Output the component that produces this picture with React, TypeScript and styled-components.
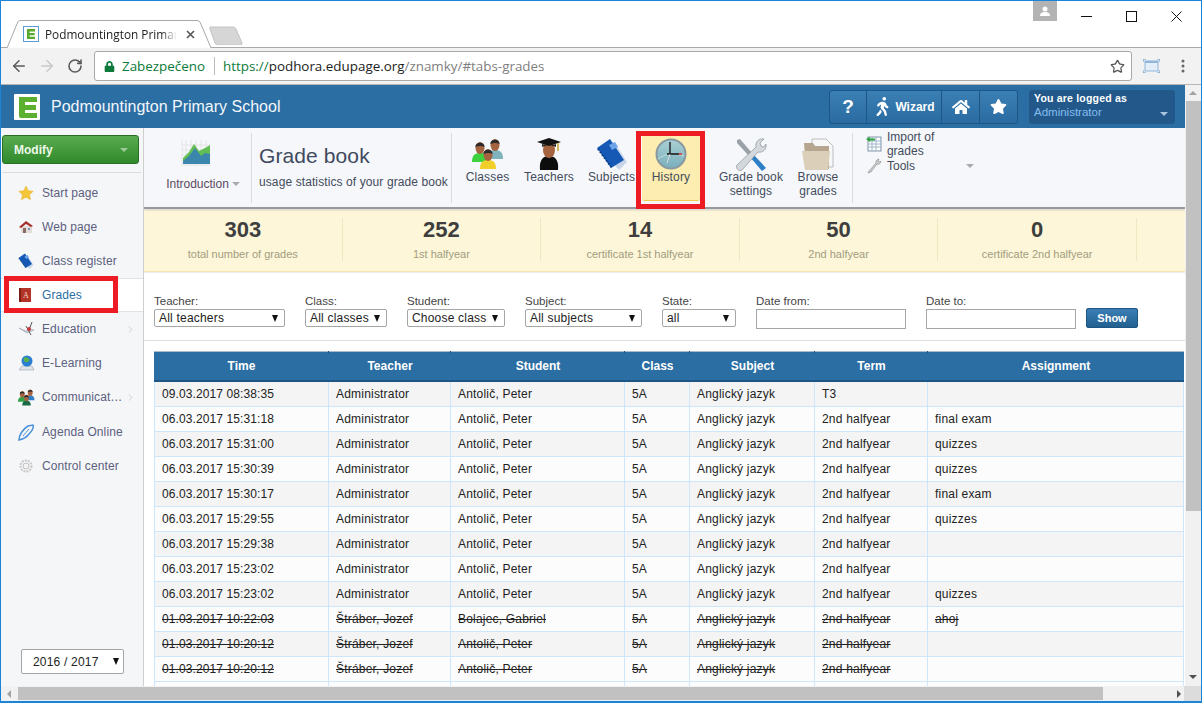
import React from "react";
import styled, { createGlobalStyle } from "styled-components";
import { ArrowLeft, ArrowRight, RotateCw, Star as StarOutline, ChevronRight } from "lucide-react";
import { FaWalking, FaHome, FaStar, FaLock } from "react-icons/fa";

const Global = createGlobalStyle`
  html, body { margin: 0; padding: 0; width: 1202px; height: 703px; overflow: hidden; background: #fff; }
  * { box-sizing: border-box; }
  body { font-family: "Liberation Sans", Arial, sans-serif; font-size: 12px; color: #222; }
`;

const Frame = styled.div`
  width: 1202px; height: 703px; display: flex; flex-direction: column;
  border: 1px solid #1a84d8; border-bottom-width: 2px; background: #fff; overflow: hidden;
`;
const TabStrip = styled.div`
  height: 47px; flex: none; display: flex; align-items: flex-end; padding-left: 6px;
  border-bottom: 1px solid #a9a9a9; position: relative; background: #fff;
`;
const Tab = styled.div`
  position: relative; width: 205px; height: 28px; margin-bottom: -1px; display: flex; align-items: center;
  padding: 0 0 0 16px; gap: 6px;
`;
const TabShape = styled.svg`position: absolute; inset: 0;`;
const TabTitle = styled.span`
  position: relative; width: 132px; overflow: hidden; white-space: nowrap; font: 11.8px "Open Sans", sans-serif; color: #222;
  -webkit-mask-image: linear-gradient(to right, #000 88%, transparent 100%);
  mask-image: linear-gradient(to right, #000 88%, transparent 100%);
`;
const TabClose = styled.svg`position: relative; flex: none; margin-left: 3px;`;
const NewTab = styled.svg`margin: 0 0 2px -3px; flex: none;`;
const WindowControls = styled.div`
  position: absolute; top: 0; right: 2px; display: flex; align-items: flex-start; height: 22px;
`;
const ProfileBadge = styled.div`
  width: 24px; height: 20px; background: #b3b3b3; display: flex; align-items: center; justify-content: center; margin-right: 7px;
`;
const WinButton = styled.div`
  width: 45px; height: 30px; display: flex; align-items: center; justify-content: center;
`;
const BrowserBar = styled.div`
  height: 37px; flex: none; display: flex; align-items: center; background: #f2f2f2;
  border-bottom: 1px solid #b5b5b5; padding: 0 0 0 4px;
`;
const NavIcon = styled.span<{ $dim?: boolean }>`
  width: 28px; height: 20px; display: flex; align-items: center; justify-content: center; color: ${p => p.$dim ? "#c9c9c9" : "#5a5a5a"};
`;
const Omnibox = styled.div`
  margin-left: 5px; width: 1038px; height: 30px; background: #fff; border: 1px solid #a9a9a9; border-radius: 3px;
  display: flex; align-items: center; padding: 0 6px 0 9px; font: 13.4px "Open Sans", sans-serif; white-space: nowrap;
`;
const Secure = styled.span`color: #0b7a3b; margin-left: 7px; padding-right: 9px; border-right: 1px solid #bbb; line-height: 18px;`;
const UrlPart = styled.span<{ $tone: "scheme" | "host" | "path" }>`
  color: ${p => p.$tone === "scheme" ? "#0b7a3b" : p.$tone === "host" ? "#222" : "#808080"};
`;
const UrlBox = styled.span`margin-left: 8px; flex: 1;`;
const BarSide = styled.div`display: flex; align-items: center; margin-left: 11px; gap: 21px;`;
const Viewport = styled.div`flex: 1; min-height: 0; display: flex;`;
const Page = styled.div`flex: 1; min-width: 0; display: flex; flex-direction: column; overflow: hidden;`;
const AppHeader = styled.header`
  height: 43px; flex: none; background: #2b6ea3; display: flex; align-items: center; padding-left: 13px; color: #fff;
`;
const School = styled.div`font-size: 16px; margin-left: 11px; color: #f3f7fb;`;
const HeadTools = styled.div`
  margin-left: auto; display: flex; height: 34px; border: 1px solid #1d5684; border-radius: 3px; margin-right: 11px;
  background: linear-gradient(#3a7fb5, #2a6ca1);
`;
const HeadTool = styled.div<{ $w: number }>`
  width: ${p => p.$w}px; display: flex; align-items: center; justify-content: center; gap: 3px; color: #fff;
  font-weight: bold; font-size: 12px; border-left: 1px solid #1d5684;
  &:first-child { border-left: 0; }
`;
const Question = styled.span`font-size: 19px;`;
const LoggedBox = styled.div`
  width: 146px; height: 34px; background: #22598a; border-radius: 3px; margin-right: 10px; padding: 1px 5px; position: relative;
  font-size: 11px; line-height: 14px;
`;
const LoggedTitle = styled.div`color: #fff; font-weight: bold; font-size: 10.5px; letter-spacing: .2px;`;
const LoggedName = styled.div`color: #86bdf0; font-size: 11.5px;`;
const Caret = styled.i<{ $color?: string }>`
  display: inline-block; width: 0; height: 0; border: 4px solid transparent; border-bottom-width: 0; border-top: 4px solid ${p => p.$color || "#aaa"};
`;
const LoggedCaret = styled(Caret)`position: absolute; right: 7px; bottom: 8px; border-top-color: #a9c6de;`;
const Body = styled.div`flex: 1; min-height: 0; display: flex;`;
const Sidebar = styled.nav`
  width: 143px; flex: none; background: #f5f6f8; border-right: 1px solid #cfcfcf; display: flex; flex-direction: column; position: relative;
`;
const ModifyButton = styled.div`
  margin: 7px 4px 0 1px; height: 29px; border: 1px solid #2a6e25; border-radius: 3px; background: linear-gradient(#5aab4f, #2f8a2c);
  color: #eef8ea; font-weight: bold; font-size: 12px; display: flex; align-items: center; justify-content: space-between; padding: 0 10px 0 11px;
`;
const SideRule = styled.div`height: 1px; background: #dcdcdc; margin: 8px 2px 3px 1px;`;
const SideItem = styled.div<{ $active?: boolean; $nudge?: boolean }>`
  height: 34px; display: flex; align-items: center; position: relative; padding-left: 17px; flex: none;
  margin-top: ${p => p.$nudge ? 1 : 0}px;
  color: ${p => p.$active ? "#2b6ea3" : "#5c5f7e"}; font-size: 12px; letter-spacing: .1px;
  background: ${p => p.$active ? "#fff" : "transparent"};
  ${p => p.$active ? "border-top: 1px solid #e2e2e2; border-bottom: 1px solid #e2e2e2;" : ""}
`;
const SideIcon = styled.span`width: 24px; flex: none; display: flex; align-items: center;`;
const SideLabel = styled.span`overflow: hidden; text-overflow: ellipsis; white-space: nowrap; max-width: 83px;`;
const SideChevron = styled(ChevronRight)`position: absolute; right: 7px; top: 12px; color: #c9c9c9;`;
const YearWrap = styled.div`margin-top: auto; padding: 0 0 12px 20px;`;
const SelectBox = styled.div<{ $w: number; $h?: number }>`
  width: ${p => p.$w}px; height: ${p => p.$h || 18}px; border: 1px solid #a6a6a6; border-radius: 2px; background: #fff;
  display: flex; align-items: center; justify-content: space-between; padding: 0 6px 0 4px; color: #222; font-size: 12px; letter-spacing: .2px; white-space: nowrap;
`;
const YearSelect = styled(SelectBox)`padding: 0 4px 0 11px; font-size: 12px;`;
const BlackCaret = styled.i`
  display: inline-block; width: 0; height: 0; border-left: 3.5px solid transparent; border-right: 3.5px solid transparent; border-top: 7px solid #111; flex: none;
`;
const Highlight = styled.div<{ $l: number; $t: number; $w: number; $h: number }>`
  position: absolute; left: ${p => p.$l}px; top: ${p => p.$t}px; width: ${p => p.$w}px; height: ${p => p.$h}px;
  border: 5px solid #ed1c24; pointer-events: none; z-index: 5;
`;
const Content = styled.main`flex: 1; min-width: 0; display: flex; flex-direction: column; position: relative; overflow: hidden;`;
const Ribbon = styled.div`
  height: 81px; flex: none; background: #f5f7fa; border-bottom: 2px solid #9a9a9a; display: flex; padding-top: 5px; box-shadow: 0 1px 2px rgba(0,0,0,.2);
  position: relative; z-index: 1;
`;
const RibbonSection = styled.div<{ $w: number; $sep?: boolean }>`
  width: ${p => p.$w}px; flex: none; height: 70px; display: flex; position: relative;
  ${p => p.$sep ? "border-right: 1px solid #dcdcdc;" : ""}
`;
const IntroBlock = styled.div`width: 100%; display: flex; flex-direction: column; align-items: center; padding-top: 7px; color: #5c4a5e;`;
const IntroIcon = styled.span`display: flex; margin-right: 4px;`;
const IntroLabel = styled.div`margin: 10px 0 0 11px; display: flex; align-items: center; gap: 3px;`;
const TitleBlock = styled.div`padding: 10px 0 0 7px;`;
const GradeTitle = styled.div`font-size: 21px; color: #3f4a5e; line-height: 26px; letter-spacing: .1px;`;
const GradeSub = styled.div`font-size: 12px; color: #444c5c; margin-top: 6px; white-space: nowrap; letter-spacing: .1px;`;
const RibbonTool = styled.div<{ $w: number; $ml?: number; $active?: boolean }>`
  width: ${p => p.$w}px; margin-left: ${p => p.$ml || 0}px; flex: none; height: 68px; display: flex; flex-direction: column; align-items: center; text-align: center; padding-top: 5px;
  color: #444c5c; font-size: 12px; line-height: 14px; letter-spacing: .15px; white-space: nowrap;
  ${p => p.$active ? "background: #fdedb0; border-bottom: 1px solid #f2c94c; border-radius: 0 0 3px 3px;" : ""}
`;
const ToolIconBox = styled.div`height: 32px; display: flex; align-items: flex-start; justify-content: center;`;
const ToolText = styled.div``;
const SideTools = styled.div`display: flex; flex-direction: column; padding: 3px 0 0 13px; gap: 6px;`;
const SideTool = styled.div`height: 16px; display: flex; align-items: center; gap: 5px; color: #444c5c; font-size: 12px; width: 108px; position: relative;`;
const ToolsCaret = styled(Caret)`position: absolute; right: 0; top: 6px;`;
const Stats = styled.div`
  height: 62px; flex: none; margin-top: 1px; background: #fdf6d8; border-bottom: 1px solid #f2e5b0; display: flex; overflow: hidden; padding-top: 8px;
  box-shadow: 0 1px 0 #ececec;
`;
const Stat = styled.div`
  width: 198.6px; flex: none; height: 43px; border-right: 1px solid #efe6c2; text-align: center;
`;
const StatValue = styled.div`font-size: 22px; font-weight: bold; color: #3e3e3e; line-height: 24px;`;
const StatLabel = styled.div`font-size: 11px; color: #a29d80; margin-top: 6px; line-height: 13px;`;
const Filters = styled.div`
  height: 68px; flex: none; margin-top: 1px; border-bottom: 1px solid #dedede; display: flex; align-items: flex-start; padding: 21px 0 0 10px; gap: 20px;
`;
const Field = styled.div`display: flex; flex-direction: column;`;
const FieldLabel = styled.label`font-size: 11.5px; color: #444; line-height: 15px;`;
const DateInput = styled.div<{ $w: number }>`width: ${p => p.$w}px; height: 20px; border: 1px solid #a6a6a6; background: #fff;`;
const ShowButton = styled.div`
  width: 52px; height: 20px; margin: 14px 0 0 -10px; background: linear-gradient(#3a7fb5, #22608f); border: 1px solid #1d5684; border-radius: 2px;
  color: #fff; font-weight: bold; font-size: 11px; display: flex; align-items: center; justify-content: center;
`;
const Grid = styled.table`
  margin: 10px 0 0 10px; width: 1030px; border-collapse: separate; border-spacing: 0; table-layout: fixed; flex: none;
`;
const Th = styled.th<{ $w: number }>`
  width: ${p => p.$w}px; height: 31px; padding: 0; background: #2b6ea3; color: #fff; font-size: 12px; font-weight: bold;
  border-top: 1px solid #a9bccb; border-bottom: 2px solid #1d5684; position: relative;
  &:not(:last-child)::after { content: ""; position: absolute; right: 0; top: -1px; width: 1px; height: 2px; background: #1d5684; }
`;
const Row = styled.tr<{ $odd: boolean; $struck: boolean }>`
  background: ${p => p.$odd ? "#f4f4f4" : "#fcfcfc"};
  text-decoration: ${p => p.$struck ? "line-through" : "none"};
`;
const Td = styled.td`
  height: 25px; padding: 0 7px; border-bottom: 1px solid #cde6fb; border-right: 1px solid #cde6fb; font-size: 12px; color: #222; white-space: nowrap; overflow: hidden;
  text-decoration: inherit; letter-spacing: .2px;
  &:first-child { border-left: 1px solid #cde6fb; letter-spacing: .1px; }
`;
const VScroll = styled.div`
  width: 16px; flex: none; background: #f1f1f1; display: flex; flex-direction: column; align-items: center; padding-top: 6px;
`;
const ScrollThumbV = styled.div`width: 15px; height: 410px; background: #c1c1c1; margin-top: 6px;`;
const ScrollArrowUp = styled.i`width: 0; height: 0; border: 4px solid transparent; border-top: 0; border-bottom: 4px solid #a3a3a3;`;
const ScrollArrowDown = styled.i`width: 0; height: 0; border: 4px solid transparent; border-bottom: 0; border-top: 4px solid #505050; margin-top: auto; margin-bottom: 7px;`;
const HScroll = styled.div`height: 15px; flex: none; background: #f1f1f1; display: flex; align-items: center;`;
const ArrowL = styled.i`width: 0; height: 0; border: 4px solid transparent; border-left: 0; border-right: 4px solid #a3a3a3; margin-left: 6px;`;
const ThumbH = styled.div`width: 1085px; height: 13px; background: #c1c1c1; margin-left: 7px;`;
const ArrowR = styled.i`width: 0; height: 0; border: 4px solid transparent; border-right: 0; border-left: 4px solid #505050; margin-left: auto; margin-right: 3px;`;
const Corner = styled.div`width: 17px; height: 100%; background: #dcdcdc; flex: none;`;

/* Drawings */
const ELogo = ({ s = 26 }: { s?: number }) => (
  <svg width={s} height={s} viewBox="0 0 26 26"><rect width="26" height="26" rx="1" fill="#fff" /><path d="M5 3h18v5H11v3h11v5H11v3h12v5H7a2 2 0 0 1-2-2z" fill="#5bb12f" /></svg>
);
const Favicon = () => (
  <svg width="16" height="16" viewBox="0 0 16 16" style={{ position: "relative", flex: "none" }}><rect x=".5" y=".5" width="15" height="15" fill="#fff" stroke="#5a9bd5" /><path d="M4 3h8v2.4H6.6v1.6h5v2.2h-5v1.5H12V13H4z" fill="#59a92c" /></svg>
);
const Chart = () => (
  <svg width="30" height="27" viewBox="0 0 30 27"><path d="M1 0v26M1 25h29M5 0v26M10 0v26M15 0v26M20 0v26M25 0v26M1 5h29M1 10h29M1 15h29M1 20h29" stroke="#e4e4e4" /><path d="M2 18l6-6 5-8 5 7 6-3 5-3v17H2z" fill="#62bd55" /><path d="M2 21l6-5 6-8 6 8 4-3 5 1v10H2z" fill="#3b86ad" /></svg>
);
const Person = ({ x, y, shirt, skin = "#a5643f" }: { x: number; y: number; shirt: string; skin?: string }) => (
  <g transform={`translate(${x} ${y})`}><path d="M0 21c0-7 3-9 8-9s8 2 8 9z" fill={shirt} /><ellipse cx="8" cy="7" rx="4.5" ry="6" fill={skin} /><path d="M3.4 6c-.5-5 9-6.400 9.200 0-3-1.500-6-1.500-9.200 0z" fill="#2b2b2b" /></g>
);
const Classes = () => (
  <svg width="32" height="32" viewBox="0 0 32 32"><Person x={15} y={0} shirt="#7fb2bd" /><Person x={0} y={3} shirt="#3fd23f" /><Person x={8} y={10} shirt="#f0cf2a" /></svg>
);
const Teacher = () => (
  <svg width="26" height="32" viewBox="0 0 26 32"><path d="M4 32c-1-10 3-14 9-14s10 4 9 14z" fill="#0d0d0d" /><ellipse cx="13" cy="12" rx="6" ry="8" fill="#a5643f" /><path d="M1 4l12-4 12 4-12 4z" fill="#111" /><path d="M6 6v3c4-2 10-2 14 0V6l-7 2z" fill="#222" /><path d="M22 5v8" stroke="#c9a227" strokeWidth="1.500" /></svg>
);
const BookBlue = ({ s = 32 }: { s?: number }) => (
  <svg width={s} height={s} viewBox="0 0 32 32"><path d="M18 4l13 20-8 8-9-10z" fill="#c6d5e8" /><path d="M14 1l14 21-13 8L1 10z" fill="#1559b5" /><path d="M13 7l6-3 3 5-6 3z" fill="#6da3e8" /><path d="M2 11l14 19" stroke="#0d3d80" strokeWidth="2" strokeDasharray="1.500 2" /></svg>
);
const Clock = () => (
  <svg width="32" height="32" viewBox="0 0 32 32"><defs><linearGradient id="clk" x1="0" y1="0" x2="0" y2="1"><stop offset="0" stopColor="#a8cfd3" /><stop offset="1" stopColor="#7bb0bd" /></linearGradient></defs><circle cx="16" cy="16" r="15.500" fill="#8a98a0" /><circle cx="16" cy="16" r="13.500" fill="url(#clk)" /><path d="M3 21c8-6 18-6 26-3" stroke="#c3dde2" fill="none" /><path d="M15 4v13M12 16h12" stroke="#111" strokeWidth="1.300" /><path d="M12 25l3-9" stroke="#ddd" /><path d="M24 16h3" stroke="#d33" strokeWidth="1.500" /></svg>
);
const Wrench = () => (
  <svg width="32" height="34" viewBox="0 0 32 34"><path d="M2 2l3-1 12 14-3 3L2 5z" fill="#9aa2a8" /><path d="M15 19l3-3 13 14-4 3z" fill="#2f7fc7" /><path d="M2 27L21 9c-1-5 3-9 8-8l-4 4 1 3 3 1 2-3c1 6-4 9-8 8L7 32c-3 2-7-2-5-5z" fill="#d3d8dc" stroke="#8d959b" strokeWidth=".7" /></svg>
);
const Folder = () => (
  <svg width="32" height="33" viewBox="0 0 32 33"><path d="M10 1h14l7 7v21H10z" fill="#f7f7f7" stroke="#bdbdbd" /><path d="M2 5h9l2 3h14v23H4z" fill="#b6a68f" /><path d="M0 13h28l-2 19H3z" fill="#dccfb9" /></svg>
);
const ImportIco = () => (
  <svg width="16" height="16" viewBox="0 0 16 16"><rect x="2" y="1" width="13" height="14" fill="#fff" stroke="#7d93a8" /><path d="M2 5h13M2 8h13M2 11h13M6 1v14M10 1v14" stroke="#9db6c9" /><path d="M0 3l4-2v1.500h5v2H4V6z" fill="#2ea33a" /></svg>
);
const ToolIco = () => (
  <svg width="16" height="16" viewBox="0 0 16 16"><path d="M2 15l1-2 7-8c-.5-2 1-4 3-4l-1 2 2 1 1-1c0 2-2 4-4 3l-6 8z" fill="#c9cbcd" stroke="#8a8a8a" strokeWidth=".6" /></svg>
);
const icoStar = <svg width="16" height="16" viewBox="0 0 16 16"><path d="M8 1l2.200 4.700 5 .6-3.700 3.400 1 5L8 12.200 3.500 14.700l1-5L.8 6.300l5-.6z" fill="#f3c739" stroke="#e5ae26" strokeWidth=".5" /></svg>;
const icoHouse = <svg width="16" height="16" viewBox="0 0 16 16"><path d="M3 7h11v7H3z" fill="#e3dcd8" /><path d="M1 8l7-6 7 5-2 1-5-3-5 4z" fill="#a8302a" /><path d="M5 9h3v5H5z" fill="#8a6a62" /><path d="M10 9h2v2h-2z" fill="#7a95b5" /></svg>;
const icoBook = <BookBlue s={16} />;
const icoGrades = <svg width="14" height="16" viewBox="0 0 14 16"><rect x="1" y="1" width="12" height="14" fill="#b33426" /><rect x="1" y="1" width="2" height="14" fill="#7d1e15" /><text x="8" y="11" fontSize="8" fontFamily="Liberation Serif, serif" textAnchor="middle" fill="#f3d9c9">A</text></svg>;
const icoEdu = <svg width="17" height="16" viewBox="0 0 17 16"><path d="M1 7l8 5 7-3-4-1-4 2z" fill="#c9d3db" stroke="#8a95a0" strokeWidth=".5" /><path d="M11 9l3-8M8 5l5 9" stroke="#555" /><circle cx="11" cy="8" r="2" fill="#c9373b" /></svg>;
const icoGlobe = <svg width="17" height="17" viewBox="0 0 17 17"><path d="M1 15l3-4h10l2 4z" fill="#dfe4ea" stroke="#8a95a0" strokeWidth=".5" /><circle cx="9" cy="6" r="5.500" fill="#2a7fd0" /><path d="M6 3c2-2 4 0 5 1s0 3-2 3-4 0-3-4z" fill="#5cb044" /></svg>;
const icoPeople = <svg width="17" height="17" viewBox="0 0 32 32"><Person x={15} y={0} shirt="#2f80c7" /><Person x={0} y={3} shirt="#2fa24a" /><Person x={8} y={10} shirt="#1a6a46" /></svg>;
const icoPen = <svg width="17" height="17" viewBox="0 0 17 17"><path d="M1 16c0-5 4-11 9-14l5-1c1 3-1 6-4 9-2 3-6 5-10 6z" fill="none" stroke="#4a90d9" strokeWidth="1.500" /><path d="M5 12l6-7" stroke="#4a90d9" /></svg>;
const icoGear = <svg width="16" height="16" viewBox="0 0 16 16"><circle cx="8" cy="8" r="5.500" fill="none" stroke="#c9c9c9" strokeWidth="2" strokeDasharray="2 1" /><circle cx="8" cy="8" r="3" fill="#f2f2f2" stroke="#c2c2c2" /></svg>;

const menu: { label: string; icon: React.ReactNode; active?: boolean; more?: boolean; nudge?: boolean }[] = [
  { label: "Start page", icon: icoStar },
  { label: "Web page", icon: icoHouse },
  { label: "Class register", icon: icoBook },
  { label: "Grades", icon: icoGrades, active: true },
  { label: "Education", icon: icoEdu, more: true },
  { label: "E-Learning", icon: icoGlobe },
  { label: "Communication", icon: icoPeople, more: true },
  { label: "Agenda Online", icon: icoPen, nudge: true },
  { label: "Control center", icon: icoGear },
];
const stats = [["303", "total number of grades"], ["252", "1st halfyear"], ["14", "certificate 1st halfyear"], ["50", "2nd halfyear"], ["0", "certificate 2nd halfyear"], ["", ""]];
const columns: [string, number][] = [["Time", 175], ["Teacher", 122], ["Student", 174], ["Class", 65], ["Subject", 125], ["Term", 113], ["Assignment", 256]];
const A = "Administrator", P = "Antolič, Peter", S = "Štráber, Jozef", L = "Anglický jazyk", H = "2nd halfyear";
const rows: [string, string, string, string, string, boolean][] = [
  ["09.03.2017 08:38:35", A, P, "T3", "", false],
  ["06.03.2017 15:31:18", A, P, H, "final exam", false],
  ["06.03.2017 15:31:00", A, P, H, "quizzes", false],
  ["06.03.2017 15:30:39", A, P, H, "quizzes", false],
  ["06.03.2017 15:30:17", A, P, H, "final exam", false],
  ["06.03.2017 15:29:55", A, P, H, "quizzes", false],
  ["06.03.2017 15:29:38", A, P, H, "", false],
  ["06.03.2017 15:23:02", A, P, H, "", false],
  ["06.03.2017 15:23:02", A, P, H, "quizzes", false],
  ["01.03.2017 10:22:03", S, "Bolajec, Gabriel", H, "ahoj", true],
  ["01.03.2017 10:20:12", S, P, H, "", true],
  ["01.03.2017 10:20:12", S, P, H, "", true],
];
const selects: [string, string, number][] = [["Teacher:", "All teachers", 131], ["Class:", "All classes", 82], ["Student:", "Choose class", 98], ["Subject:", "All subjects", 117], ["State:", "all", 74]];

export default function App() {
  return (
    <Frame>
      <Global />
      <TabStrip>
        <Tab>
          <TabShape width="205" height="28" viewBox="0 0 205 28"><path d="M0 28 L11 1.500 Q12 .5 14 .5 H190 Q192 .5 193 2 L204 28" fill="#fff" stroke="#a9a9a9" /></TabShape>
          <Favicon />
          <TabTitle>Podmountington Primary School</TabTitle>
          <TabClose width="9" height="9" viewBox="0 0 9 9"><path d="M1 1l7 7M8 1l-7 7" stroke="#555" strokeWidth="1.600" /></TabClose>
        </Tab>
        <NewTab width="34" height="19" viewBox="0 0 34 19"><path d="M1 1h23q2 0 3 2l6 14q.5 2-2 2H9q-2 0-3-2L1 3q-.5-2 0-2z" fill="#d6d6d6" stroke="#c4c4c4" /></NewTab>
        <WindowControls>
          <ProfileBadge><svg width="10" height="10" viewBox="0 0 10 10"><circle cx="5" cy="3" r="2.500" fill="#fff" /><path d="M0 10c0-3 2-4 5-4s5 1 5 4z" fill="#fff" /></svg></ProfileBadge>
          <WinButton><svg width="11" height="11" viewBox="0 0 11 11"><path d="M0 5.500h11" stroke="#111" /></svg></WinButton>
          <WinButton><svg width="11" height="11" viewBox="0 0 11 11"><rect x=".5" y=".5" width="10" height="10" fill="none" stroke="#111" /></svg></WinButton>
          <WinButton><svg width="11" height="11" viewBox="0 0 11 11"><path d="M.5.500l10 10M10.500.500l-10 10" stroke="#111" /></svg></WinButton>
        </WindowControls>
      </TabStrip>
      <BrowserBar>
        <NavIcon><ArrowLeft size={18} /></NavIcon>
        <NavIcon $dim><ArrowRight size={18} /></NavIcon>
        <NavIcon><RotateCw size={16} strokeWidth={2.4} /></NavIcon>
        <Omnibox>
          <FaLock size={11} color="#0b7a3b" />
          <Secure>Zabezpečeno</Secure>
          <UrlBox><UrlPart $tone="scheme">https://</UrlPart><UrlPart $tone="host">podhora.edupage.org</UrlPart><UrlPart $tone="path">/znamky/#tabs-grades</UrlPart></UrlBox>
          <StarOutline size={15} color="#555" strokeWidth={2} />
        </Omnibox>
        <BarSide>
          <svg width="17" height="14" viewBox="0 0 17 14"><rect x="2" y="2" width="13" height="10" fill="#e3eef8" stroke="#8fb6dc" /><path d="M2 3h13" stroke="#8fb6dc" strokeWidth="2" /><path d="M0 3V0h3M14 0h3v3M0 11v3h3M14 14h3v-3" fill="none" stroke="#5f94c6" /></svg>
          <svg width="4" height="14" viewBox="0 0 4 14"><circle cx="2" cy="2" r="1.500" fill="#666" /><circle cx="2" cy="7" r="1.500" fill="#666" /><circle cx="2" cy="12" r="1.500" fill="#666" /></svg>
        </BarSide>
      </BrowserBar>
      <Viewport>
        <Page>
          <AppHeader>
            <ELogo />
            <School>Podmountington Primary School</School>
            <HeadTools>
              <HeadTool $w={36}><Question>?</Question></HeadTool>
              <HeadTool $w={75}><FaWalking size={19} />Wizard</HeadTool>
              <HeadTool $w={38}><FaHome size={18} /></HeadTool>
              <HeadTool $w={38}><FaStar size={17} /></HeadTool>
            </HeadTools>
            <LoggedBox>
              <LoggedTitle>You are logged as</LoggedTitle>
              <LoggedName>Administrator</LoggedName>
              <LoggedCaret />
            </LoggedBox>
          </AppHeader>
          <Body>
            <Sidebar>
              <ModifyButton>Modify<Caret $color="#9fc99a" /></ModifyButton>
              <SideRule />
              {menu.map(m => (
                <SideItem key={m.label} $active={m.active} $nudge={m.nudge}>
                  <SideIcon>{m.icon}</SideIcon>
                  <SideLabel>{m.label}</SideLabel>
                  {m.more && <SideChevron size={11} />}
                </SideItem>
              ))}
              <YearWrap>
                <YearSelect $w={103} $h={25}>2016 / 2017<BlackCaret /></YearSelect>
              </YearWrap>
              <Highlight $l={3} $t={148} $w={114} $h={37} />
            </Sidebar>
            <Content>
              <Ribbon>
                <RibbonSection $w={108} $sep>
                  <IntroBlock><IntroIcon><Chart /></IntroIcon><IntroLabel>Introduction <Caret /></IntroLabel></IntroBlock>
                </RibbonSection>
                <RibbonSection $w={200} $sep>
                  <TitleBlock><GradeTitle>Grade book</GradeTitle><GradeSub>usage statistics of your grade book</GradeSub></TitleBlock>
                </RibbonSection>
                <RibbonTool $w={71}><ToolIconBox><Classes /></ToolIconBox><ToolText>Classes</ToolText></RibbonTool>
                <RibbonTool $w={52}><ToolIconBox><Teacher /></ToolIconBox><ToolText>Teachers</ToolText></RibbonTool>
                <RibbonTool $w={61} $ml={6}><ToolIconBox><BookBlue /></ToolIconBox><ToolText>Subjects</ToolText></RibbonTool>
                <RibbonTool $w={58} $active><ToolIconBox><Clock /></ToolIconBox><ToolText>History</ToolText></RibbonTool>
                <RibbonTool $w={82} $ml={10}><ToolIconBox><Wrench /></ToolIconBox><ToolText>Grade book<br />settings</ToolText></RibbonTool>
                <RibbonTool $w={52}><ToolIconBox><Folder /></ToolIconBox><ToolText>Browse<br />grades</ToolText></RibbonTool>
                <RibbonSection $w={9} $sep />
                <SideTools>
                  <SideTool><ImportIco />Import of grades</SideTool>
                  <SideTool><ToolIco />Tools<ToolsCaret /></SideTool>
                </SideTools>
                <Highlight $l={492} $t={3} $w={69} $h={78} />
              </Ribbon>
              <Stats>
                {stats.map(([v, l], i) => (
                  <Stat key={i}><StatValue>{v}</StatValue><StatLabel>{l}</StatLabel></Stat>
                ))}
              </Stats>
              <Filters>
                {selects.map(([label, val, w]) => (
                  <Field key={label}><FieldLabel>{label}</FieldLabel><SelectBox $w={w}>{val}<BlackCaret /></SelectBox></Field>
                ))}
                <Field><FieldLabel>Date from:</FieldLabel><DateInput $w={150} /></Field>
                <Field><FieldLabel>Date to:</FieldLabel><DateInput $w={150} /></Field>
                <ShowButton>Show</ShowButton>
              </Filters>
              <Grid>
                <thead><tr>{columns.map(([c, w]) => <Th key={c} $w={w}>{c}</Th>)}</tr></thead>
                <tbody>
                  {rows.map((r, i) => (
                    <Row key={i} $odd={i % 2 === 0} $struck={r[5]}>
                      <Td>{r[0]}</Td><Td>{r[1]}</Td><Td>{r[2]}</Td><Td>5A</Td><Td>{L}</Td><Td>{r[3]}</Td><Td>{r[4]}</Td>
                    </Row>
                  ))}
                  <Row $odd={false} $struck={false}><Td /><Td /><Td /><Td /><Td /><Td /><Td /></Row>
                </tbody>
              </Grid>
            </Content>
          </Body>
        </Page>
        <VScroll><ScrollArrowUp /><ScrollThumbV /><ScrollArrowDown /></VScroll>
      </Viewport>
      <HScroll><ArrowL /><ThumbH /><ArrowR /><Corner /></HScroll>
    </Frame>
  );
}
